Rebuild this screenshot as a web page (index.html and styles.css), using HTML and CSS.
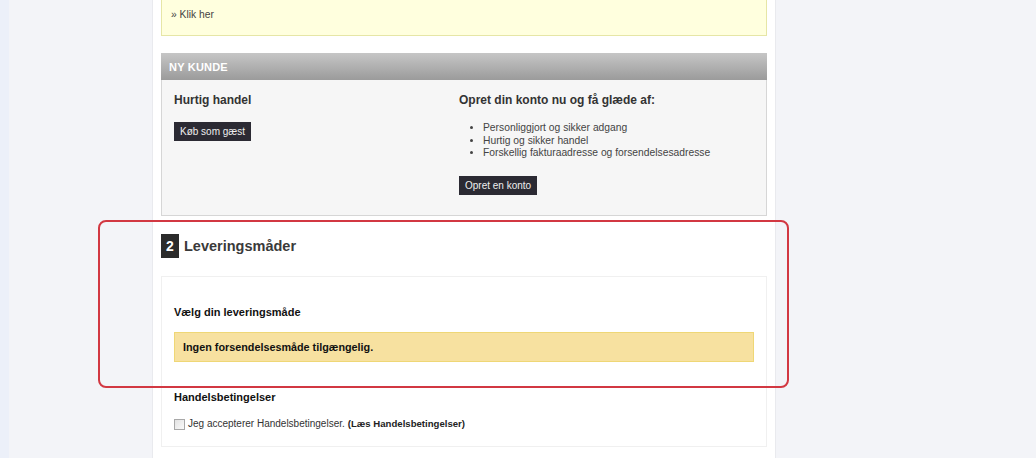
FILE: index.html
```html
<!DOCTYPE html>
<html lang="da">
<head>
    <meta charset="UTF-8">
    <title>Kasse</title>
    <link rel="stylesheet" href="styles.css">
</head>
<body>
    <div class="page">
        <div class="column">
            <div class="notice">
                <a href="#">» Klik her</a>
            </div>

            <div class="new-customer">
                <div class="box-title">NY KUNDE</div>
                <div class="box-body">
                    <div class="col">
                        <h3>Hurtig handel</h3>
                        <button class="dark-btn">Køb som gæst</button>
                    </div>
                    <div class="col">
                        <h3>Opret din konto nu og få glæde af:</h3>
                        <ul class="benefits">
                            <li>Personliggjort og sikker adgang</li>
                            <li>Hurtig og sikker handel</li>
                            <li>Forskellig fakturaadresse og forsendelsesadresse</li>
                        </ul>
                        <button class="dark-btn">Opret en konto</button>
                    </div>
                </div>
            </div>

            <div class="step-head">
                <span class="step-num">2</span>
                <h2>Leveringsmåder</h2>
            </div>

            <div class="step-box">
                <h4>Vælg din leveringsmåde</h4>
                <div class="alert">Ingen forsendelsesmåde tilgængelig.</div>

                <h4 class="terms-title">Handelsbetingelser</h4>
                <label class="terms">
                    <span class="checkbox"></span>
                    Jeg accepterer Handelsbetingelser. <strong>(Læs Handelsbetingelser)</strong>
                </label>
            </div>
        </div>
    </div>

    <!-- annotation frame drawn over the shipping step -->
    <div class="highlight"></div>
</body>
</html>
```

FILE: styles.css
```css
body {
    margin: 0;
    font-family: "Liberation Sans", Arial, sans-serif;
    font-size: 10.3px;
    color: #333;
    background: linear-gradient(to right, #ecf0f9 0, #ecf0f9 9px, #f3f4f8 9px);
    height: 458px;
    overflow: hidden;
}
.page {
    padding-left: 153px;
}
.column {
    width: 606px;
    min-height: 458px;
    padding: 0 8px;
    background-color: #fff;
    border-left: 1px solid #e9eaee;
    border-right: 1px solid #e9eaee;
    margin-left: -1px;
}
.notice {
    height: 36px;
    background-color: #ffffde;
    border: 1px solid #e6e6a6;
    border-top: none;
    padding: 8px 9px 0;
    box-sizing: border-box;
}
.notice a {
    color: #444;
    text-decoration: none;
    line-height: 14px;
    display: block;
}
.new-customer {
    margin-top: 17px;
}
.box-title {
    height: 27px;
    line-height: 28px;
    padding-left: 8px;
    background: linear-gradient(#c6c6c6, #9b9b9b);
    color: #fff;
    font-weight: bold;
    font-size: 11px;
    letter-spacing: 0.2px;
}
.box-body {
    display: flex;
    background-color: #f6f6f6;
    border: 1px solid #d6d6d6;
    border-top: none;
    padding: 12px 12px 20px;
    height: 136px;
    box-sizing: border-box;
}
.col:first-child {
    width: 285px;
}
.col h3 {
    margin: 0;
    font-size: 12px;
    line-height: 16px;
    color: #333;
}
.dark-btn {
    display: block;
    margin-top: 14px;
    height: 19px;
    padding: 0 6px;
    border: none;
    background-color: #2b2a33;
    color: #eee;
    font-family: inherit;
    font-size: 10px;
    line-height: 19px;
}
.benefits {
    margin: 14px 0 0;
    padding-left: 24px;
    line-height: 12.5px;
    color: #444;
}
.benefits + .dark-btn {
    margin-top: 16px;
}
.step-head {
    display: flex;
    align-items: center;
    margin-top: 18px;
}
.step-num {
    width: 18px;
    height: 24px;
    line-height: 24px;
    text-align: center;
    background-color: #2b2b2b;
    color: #fff;
    font-weight: bold;
    font-size: 14px;
}
.step-head h2 {
    margin: 0 0 0 5px;
    font-size: 14.5px;
    font-weight: bold;
    color: #3a3a3a;
}
.step-box {
    margin-top: 18px;
    border: 1px solid #f0f0f0;
    padding: 28px 12px 16px;
    height: 171px;
    box-sizing: border-box;
}
.step-box h4 {
    margin: 0;
    font-size: 11px;
    line-height: 14px;
    color: #111;
}
.alert {
    margin-top: 13px;
    height: 30px;
    line-height: 29px;
    padding-left: 8px;
    background-color: #f7e1a0;
    border: 1px solid #efd776;
    box-sizing: border-box;
    font-size: 10.8px;
    font-weight: bold;
    color: #111;
}
.step-box .terms-title {
    margin-top: 28px;
}
.terms {
    display: flex;
    align-items: center;
    margin-top: 13px;
    line-height: 14px;
    font-size: 10px;
    color: #333;
}
.terms strong {
    margin-left: 3px;
    font-size: 9.6px;
    color: #222;
}
.checkbox {
    width: 9px;
    height: 9px;
    border: 1px solid #a8a8a8;
    background: linear-gradient(135deg, #e2e2e2, #fafafa);
    margin-right: 3px;
}
.highlight {
    position: absolute;
    left: 98px;
    top: 220px;
    width: 687px;
    height: 164px;
    border: 2px solid #d23842;
    border-radius: 8px;
}
```
